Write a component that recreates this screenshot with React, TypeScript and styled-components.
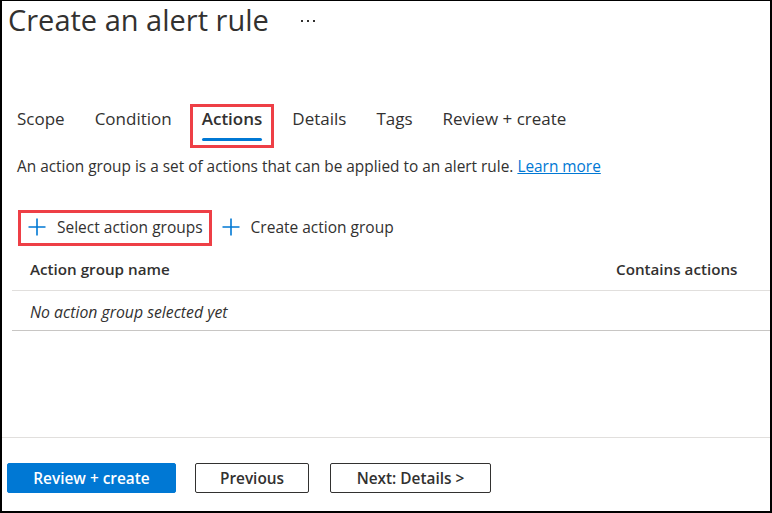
import styled, { createGlobalStyle } from "styled-components";

const GlobalStyle = createGlobalStyle`
  html, body {
    margin: 0;
    padding: 0;
    background: #ffffff;
  }
  body {
    font-family: "Open Sans", "Noto Sans", Arial, sans-serif;
    color: #323130;
  }
`;

const Frame = styled.div`
  width: 772px;
  height: 513px;
  box-sizing: border-box;
  border: 2px solid #000000;
  border-top-width: 1px;
  display: flex;
  flex-direction: column;
  overflow: hidden;
`;

const Header = styled.div`
  display: flex;
  align-items: center;
  height: 38px;
  padding-left: 6px;
  gap: 32px;
`;

const Title = styled.h1`
  margin: 0;
  font-size: 29px;
  font-weight: 400;
  line-height: 38px;
  color: #323130;
`;

const More = styled.div`
  display: flex;
  gap: 4px;
  padding-top: 2px;
`;

const Dot = styled.span`
  width: 2px;
  height: 2px;
  background: #323130;
`;

const Content = styled.div`
  flex: 1;
  display: flex;
  flex-direction: column;
`;

const TabList = styled.div`
  display: flex;
  gap: 6px;
  margin-top: 65px;
  padding-left: 3px;
`;

const Tab = styled.div<{ $highlight?: boolean }>`
  display: flex;
  flex-direction: column;
  padding: 1px 9px 4px;
  border: 3px solid ${(p) => (p.$highlight ? "#ee3f46" : "transparent")};
`;

const TabLabel = styled.span<{ $active?: boolean }>`
  font-size: 17px;
  line-height: 22px;
  font-weight: ${(p) => (p.$active ? 600 : 400)};
  color: #323130;
  white-space: nowrap;
`;

const TabBar = styled.span<{ $active?: boolean }>`
  margin-top: 8px;
  height: 3px;
  border-radius: 2px;
  background: ${(p) => (p.$active ? "#0078d4" : "transparent")};
`;

const Description = styled.p`
  margin: 9px 0 0 15px;
  font-size: 15.4px;
  line-height: 20px;
  color: #323130;
`;

const Link = styled.a`
  color: #0078d4;
  text-decoration: underline;
`;

const CommandBar = styled.div`
  display: flex;
  margin: 33px 0 0 16px;
`;

const Command = styled.div<{ $highlight?: boolean }>`
  display: flex;
  align-items: center;
  gap: 11px;
  padding: 2px 6px 4px 7px;
  border: 3px solid ${(p) => (p.$highlight ? "#ee3f46" : "transparent")};
  font-size: 15.5px;
  line-height: 24px;
  color: #323130;
  white-space: nowrap;
`;

const Table = styled.div`
  margin: 2px 0 0 10px;
  width: 800px;
`;

const Row = styled.div<{ $head?: boolean }>`
  display: grid;
  grid-template-columns: 586px 1fr;
  align-items: center;
  height: ${(p) => (p.$head ? "42px" : "39px")};
  border-bottom: 1px solid ${(p) => (p.$head ? "#e1dfdd" : "#c8c6c4")};
`;

const HeadCell = styled.div`
  padding-left: 18px;
  font-size: 15.2px;
  font-weight: 600;
  color: #323130;
  white-space: nowrap;
`;

const EmptyCell = styled.div`
  padding: 3px 0 0 18px;
  font-size: 15.8px;
  font-style: italic;
  color: #323130;
`;

const Footer = styled.div`
  display: flex;
  gap: 19px;
  padding: 25px 0 18px 5px;
  border-top: 1px solid #e1dfdd;
`;

const Button = styled.button<{ $primary?: boolean; $w: number; $shift?: number }>`
  width: ${(p) => p.$w}px;
  height: 30px;
  margin-left: ${(p) => p.$shift ?? 0}px;
  box-sizing: border-box;
  border-radius: 2px;
  border: 1px solid ${(p) => (p.$primary ? "#0078d4" : "#323130")};
  background: ${(p) => (p.$primary ? "#0078d4" : "#ffffff")};
  color: ${(p) => (p.$primary ? "#ffffff" : "#323130")};
  font-family: "Open Sans", Arial, sans-serif;
  font-size: 15.4px;
  font-weight: 600;
  padding: 0;
`;

const PlusIcon = () => (
  <svg width="18" height="18" viewBox="0 0 18 18">
    <path d="M9 0.5V17.5M0.5 9H17.5" stroke="#0078d4" strokeWidth="1.6" fill="none" />
  </svg>
);

const tabs = ["Scope", "Condition", "Actions", "Details", "Tags", "Review + create"];

const App = () => {
  return (
    <>
      <GlobalStyle />
      <Frame>
        <Header>
          <Title>Create an alert rule</Title>
          <More>
            <Dot />
            <Dot />
            <Dot />
          </More>
        </Header>
        <Content>
          <TabList>
            {tabs.map((t) => (
              <Tab key={t} $highlight={t === "Actions"}>
                <TabLabel $active={t === "Actions"}>{t}</TabLabel>
                <TabBar $active={t === "Actions"} />
              </Tab>
            ))}
          </TabList>
          <Description>
            An action group is a set of actions that can be applied to an alert rule.{" "}
            <Link href="#">Learn more</Link>
          </Description>
          <CommandBar>
            <Command $highlight>
              <PlusIcon />
              Select action groups
            </Command>
            <Command>
              <PlusIcon />
              Create action group
            </Command>
          </CommandBar>
          <Table>
            <Row $head>
              <HeadCell>Action group name</HeadCell>
              <HeadCell>Contains actions</HeadCell>
            </Row>
            <Row>
              <EmptyCell>No action group selected yet</EmptyCell>
            </Row>
          </Table>
        </Content>
        <Footer>
          <Button $primary $w={169}>Review + create</Button>
          <Button $w={114}>Previous</Button>
          <Button $w={161} $shift={2}>Next: Details &gt;</Button>
        </Footer>
      </Frame>
    </>
  );
};

export default App;
